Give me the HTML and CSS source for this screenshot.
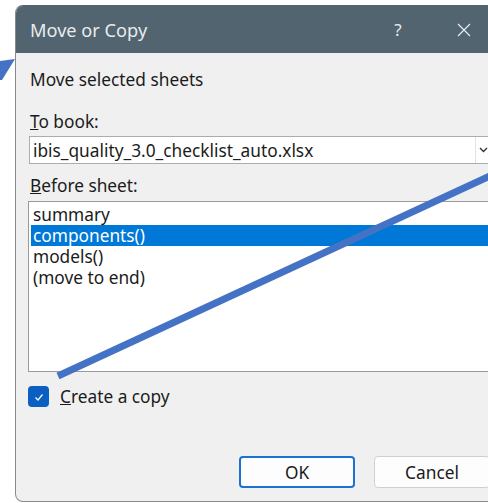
FILE: index.html
```html
<!DOCTYPE html>
<html lang="en">
<head>
<meta charset="utf-8">
<title>Move or Copy</title>
<link rel="stylesheet" href="styles.css">
</head>
<body>
  <div class="dialog">
    <div class="titlebar">
      <span class="title">Move or Copy</span>
      <span class="caption-btn help">?</span>
      <span class="caption-btn close">
        <svg width="14" height="14" viewBox="0 0 14 14"><path d="M1 1 L13 13 M13 1 L1 13" stroke="#e8ecee" stroke-width="1.2" fill="none"/></svg>
      </span>
    </div>
    <div class="content">
      <div class="line msg">Move selected sheets</div>
      <div class="line label label-book"><u>T</u>o book:</div>
      <div class="combo">
        <span class="combo-text">ibis_quality_3.0_checklist_auto.xlsx</span>
        <span class="combo-btn">
          <svg width="9" height="6" viewBox="0 0 9 6"><path d="M1 1 L4.5 4.5 L8 1" stroke="#333" stroke-width="1.4" fill="none"/></svg>
        </span>
      </div>
      <div class="line label label-sheet"><u>B</u>efore sheet:</div>
      <ul class="listbox">
        <li class="item">summary</li>
        <li class="item selected">components()</li>
        <li class="item">models()</li>
        <li class="item">(move to end)</li>
      </ul>
      <div class="check-row">
        <span class="checkbox">
          <svg width="21" height="21" viewBox="0 0 21 21"><path d="M7.5 11.5 L10 14 L14.5 8.5" stroke="#ffffff" stroke-width="1.2" fill="none"/></svg>
        </span>
        <span class="check-label"><u>C</u>reate a copy</span>
      </div>
      <div class="buttons">
        <button class="btn primary">OK</button>
        <button class="btn">Cancel</button>
      </div>
    </div>
  </div>
  <svg class="annotations" width="488" height="503" viewBox="0 0 488 503">
    <polygon points="15,59 0,61 0,80 2,80" fill="#4472c4"/>
    <line x1="58" y1="376" x2="492" y2="175" stroke="#4472c4" stroke-width="7"/>
  </svg>
</body>
</html>
```

FILE: styles.css
```css
html, body {
  margin: 0;
  padding: 0;
  overflow: hidden;
  background: #ffffff;
  width: 488px;
  height: 503px;
}

body {
  font-family: "Noto Sans", "Open Sans", sans-serif;
  font-size: 17.3px;
  color: #1b1b1b;
  position: relative;
}

.dialog {
  margin: 5px 0 0 15px;
  width: 490px;
  height: 497px;
  box-sizing: border-box;
  border: 1px solid #8a8a8a;
  border-top-color: #52646f;
  border-radius: 8px;
  background: #f0f0f0;
  overflow: hidden;
  display: flex;
  flex-direction: column;
}

.titlebar {
  height: 47px;
  flex: none;
  background: #52646f;
  color: #e8ecee;
  display: flex;
  align-items: center;
  padding-left: 14px;
  padding-right: 7px;
}

.title {
  font-size: 18.2px;
  flex: 1;
}

.caption-btn {
  width: 66px;
  height: 47px;
  display: flex;
  align-items: center;
  justify-content: center;
}

.help {
  font-size: 17px;
}

.content {
  padding: 0 13px;
  display: flex;
  flex-direction: column;
}

.line {
  height: 22px;
  line-height: 22px;
  white-space: nowrap;
}

.msg {
  margin-top: 16px;
  padding-left: 1px;
}

.label {
  padding-left: 1px;
}

.label-book {
  margin-top: 20px;
}

.label-sheet {
  margin-top: 11px;
}

.combo {
  margin-top: 3px;
  height: 28px;
  box-sizing: border-box;
  border: 1px solid #acacac;
  background: #ffffff;
  display: flex;
  align-items: center;
}

.combo-text {
  flex: 1;
  padding-left: 3px;
  white-space: nowrap;
}

.combo-btn {
  width: 14px;
  height: 26px;
  border-left: 1px solid #e3e3e3;
  display: flex;
  align-items: center;
  justify-content: center;
}

.listbox {
  list-style: none;
  margin: 4px 0 0 -1px;
  padding: 2px;
  height: 171px;
  box-sizing: border-box;
  border: 1px solid #9a9a9a;
  background: #ffffff;
}

.item {
  height: 21px;
  line-height: 21px;
  padding-left: 2px;
  white-space: nowrap;
}

.item.selected {
  background: #0078d7;
  color: #ffffff;
}

.check-row {
  margin-top: 14px;
  display: flex;
  align-items: center;
  height: 21px;
}

.checkbox {
  width: 21px;
  height: 21px;
  margin-left: -1px;
  border-radius: 4px;
  background: #0a5fc0;
  display: flex;
}

.check-label {
  margin-left: 11px;
}

.buttons {
  margin-top: 49px;
  display: flex;
  justify-content: flex-end;
  gap: 19px;
  padding-right: 1px;
}

.btn {
  width: 116px;
  height: 32px;
  box-sizing: border-box;
  font-family: inherit;
  font-size: 17.3px;
  color: #1b1b1b;
  background: #fdfdfd;
  border: 1px solid #d0d0d0;
  border-radius: 4px;
  padding: 0;
}

.btn.primary {
  border: 2px solid #1a73cc;
}

.annotations {
  position: absolute;
  left: 0;
  top: 0;
  pointer-events: none;
}
```
